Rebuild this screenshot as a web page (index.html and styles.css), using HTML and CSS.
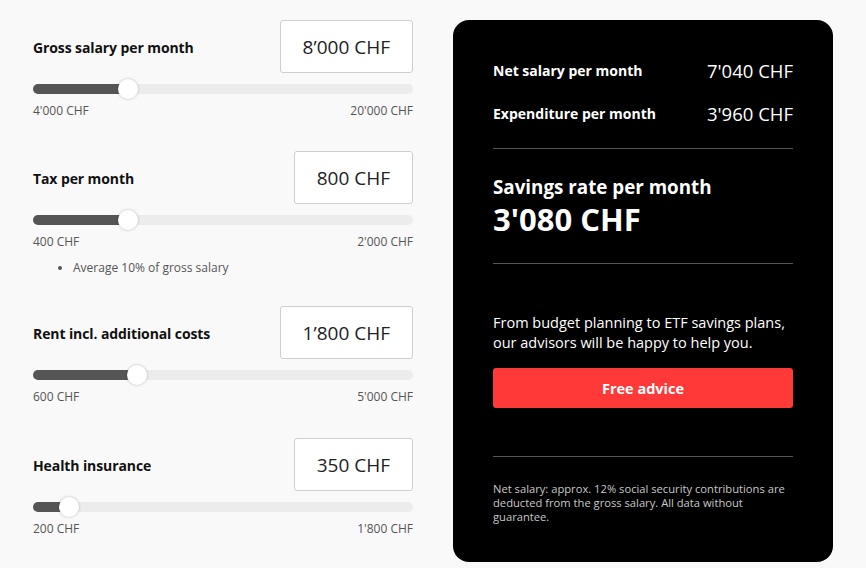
FILE: index.html
```html
<!DOCTYPE html>
<html>
<head>
<meta charset="utf-8">
<link rel="stylesheet" href="styles.css">
</head>
<body>
<div class="page">
  <div class="inputs">
    <div class="field">
      <div class="field-head">
        <div class="field-label">Gross salary per month</div>
        <div class="field-box">8’000 CHF</div>
      </div>
      <div class="slider"><div class="fill" style="width:25%"></div><div class="thumb" style="left:25%"></div></div>
      <div class="range"><span>4'000 CHF</span><span>20'000 CHF</span></div>
    </div>
    <div class="field field-noted">
      <div class="field-head">
        <div class="field-label">Tax per month</div>
        <div class="field-box">800 CHF</div>
      </div>
      <div class="slider"><div class="fill" style="width:25%"></div><div class="thumb" style="left:25%"></div></div>
      <div class="range"><span>400 CHF</span><span>2'000 CHF</span></div>
      <ul class="note"><li>Average 10% of gross salary</li></ul>
    </div>
    <div class="field field-wide">
      <div class="field-head">
        <div class="field-label">Rent incl. additional costs</div>
        <div class="field-box">1’800 CHF</div>
      </div>
      <div class="slider"><div class="fill" style="width:27.3%"></div><div class="thumb" style="left:27.3%"></div></div>
      <div class="range"><span>600 CHF</span><span>5'000 CHF</span></div>
    </div>
    <div class="field">
      <div class="field-head">
        <div class="field-label">Health insurance</div>
        <div class="field-box">350 CHF</div>
      </div>
      <div class="slider"><div class="fill" style="width:9.4%"></div><div class="thumb" style="left:9.4%"></div></div>
      <div class="range"><span>200 CHF</span><span>1'800 CHF</span></div>
    </div>
  </div>
  <div class="card">
    <div class="row"><span class="row-label">Net salary per month</span><span class="row-value">7'040 CHF</span></div>
    <div class="row"><span class="row-label">Expenditure per month</span><span class="row-value">3'960 CHF</span></div>
    <hr class="divider">
    <div class="savings">
      <div class="savings-label">Savings rate per month</div>
      <div class="savings-value">3'080 CHF</div>
    </div>
    <hr class="divider">
    <p class="pitch">From budget planning to ETF savings plans, our advisors will be happy to help you.</p>
    <button class="cta">Free advice</button>
    <hr class="divider">
    <p class="foot">Net salary: approx. 12% social security contributions are deducted from the gross salary. All data without guarantee.</p>
  </div>
</div>
</body>
</html>
```

FILE: styles.css
```css
* { box-sizing: border-box; }
html, body { margin: 0; padding: 0; }
body {
  background: #f9f9f9;
  font-family: "Open Sans", "Noto Sans", sans-serif;
  color: #111;
  width: 866px;
  height: 568px;
  overflow: hidden;
}
.page {
  display: flex;
  gap: 40px;
  padding: 20px 33px 0 33px;
}
.inputs {
  width: 380px;
  display: flex;
  flex-direction: column;
}
.field { margin-bottom: 32px; }
.field-noted { margin-bottom: 30px; }
.field-wide { margin-bottom: 33px; }
.field-head {
  display: flex;
  justify-content: space-between;
  align-items: center;
  height: 53px;
}
.field-label {
  font-weight: 700;
  font-size: 14px;
  color: #111;
  letter-spacing: -0.1px;
  padding-top: 2px;
}
.field-box {
  height: 53px;
  padding: 0 22px;
  border: 1px solid #cfcfcf;
  border-radius: 3px;
  background: #fff;
  font-size: 19px;
  color: #222;
  display: flex;
  align-items: center;
}
.slider {
  position: relative;
  height: 10px;
  margin-top: 11px;
  background: #ececec;
  border-radius: 5px;
}
.fill {
  height: 10px;
  background: #555;
  border-radius: 5px;
}
.thumb {
  position: absolute;
  top: -5px;
  width: 20px;
  height: 20px;
  margin-left: -10px;
  background: #fff;
  border-radius: 50%;
  box-shadow: 0 0 3px rgba(0,0,0,0.25);
}
.range {
  display: flex;
  justify-content: space-between;
  margin-top: 8px;
  font-size: 12px;
  line-height: 17px;
  color: #555;
}
.note {
  margin: 9px 0 0 0;
  padding-left: 40px;
  font-size: 12px;
  line-height: 17px;
  color: #555;
}
.card {
  width: 380px;
  height: 542px;
  background: #000;
  border-radius: 16px;
  padding: 40px 40px 0 40px;
  color: #fff;
}
.row {
  display: flex;
  justify-content: space-between;
  align-items: center;
  height: 43px;
}
.row-label { font-weight: 700; font-size: 14px; }
.row-value { font-size: 18.5px; }
.divider {
  border: 0;
  border-top: 1px solid #555;
  margin: 0;
}
.card > .row:first-child { margin-top: -11px; }
.card > .row + .divider { margin-top: 13px; }
.savings { padding: 26px 0 24px 0; }
.savings-label { font-weight: 700; font-size: 18.8px; line-height: 24px; }
.savings-value { font-weight: 700; font-size: 31px; line-height: 40px; }
.pitch {
  margin: 49px 0 0 0;
  font-size: 14.5px;
  line-height: 20px;
}
.cta {
  display: block;
  width: 100%;
  height: 40px;
  margin-top: 15px;
  border: 0;
  border-radius: 3px;
  background: #ff3838;
  color: #fff;
  font-family: inherit;
  font-weight: 700;
  font-size: 14.5px;
}
.cta + .divider { margin-top: 48px; }
.foot {
  margin: 25px 0 0 0;
  font-size: 11.2px;
  line-height: 14px;
  color: #c8c8c8;
}
```
